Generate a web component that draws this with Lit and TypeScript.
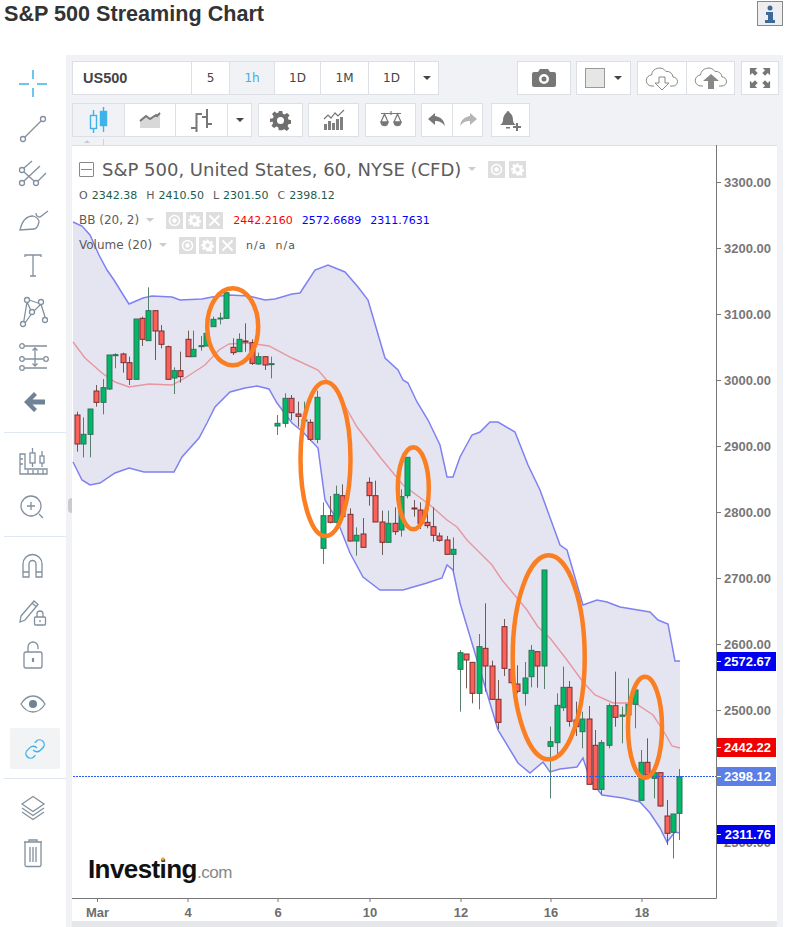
import { LitElement, html, css, svg, nothing } from 'lit';
import { customElement } from 'lit/decorators.js';

// [center x, body top, body bottom, wick top, wick bottom, colour], in zoomed-crop units
type Row = [number, number, number, number, number, 'g' | 'r'];

const seg = (ox: number, oy: number, rows: Row[]) =>
  rows.map(([x, t, b, wt, wb, c]) => ({
    x: ox + x / 3,
    top: oy + t / 3,
    bot: oy + b / 3,
    wt: oy + wt / 3,
    wb: oy + wb / 3,
    c,
  }));

const CANDLES = [
  ...seg(72, 260, [
    [14, 465, 552, 455, 575, 'r'], [33, 523, 552, 472, 592, 'g'], [55, 447, 523, 447, 592, 'g'],
    [72, 393, 427, 375, 440, 'r'], [94, 383, 427, 357, 463, 'g'], [112, 285, 387, 285, 390, 'g'],
    [130, 284, 287, 280, 325, 'g'], [152, 282, 308, 278, 338, 'r'], [170, 308, 358, 290, 375, 'r'],
    [191, 177, 358, 177, 358, 'g'], [209, 175, 238, 170, 258, 'r'], [228, 152, 242, 82, 242, 'g'],
    [249, 152, 213, 152, 300, 'r'], [267, 213, 253, 195, 265, 'r'], [288, 260, 358, 257, 358, 'r'],
    [306, 332, 354, 322, 402, 'g'], [325, 332, 350, 275, 368, 'r'], [347, 238, 290, 212, 290, 'r'],
    [364, 268, 290, 212, 290, 'g'], [386, 257, 260, 228, 272, 'g'], [403, 220, 258, 205, 258, 'g'],
    [422, 178, 200, 170, 200, 'g'], [443, 174, 177, 158, 193, 'g'], [461, 98, 175, 98, 175, 'g'],
    [483, 262, 278, 235, 285, 'r'], [501, 238, 275, 220, 275, 'g'], [519, 243, 246, 190, 275, 'r'],
    [541, 248, 310, 238, 315, 'r'], [558, 290, 312, 278, 315, 'g'], [580, 290, 315, 290, 330, 'r'],
    [598, 311, 314, 290, 355, 'g'],
  ]),
  ...seg(270, 370, [
    [22, 160, 168, 135, 195, 'g'], [44, 85, 160, 70, 172, 'g'], [62, 85, 128, 75, 150, 'r'],
    [83, 132, 139, 95, 170, 'r'], [101, 150, 153, 95, 175, 'g'], [119, 157, 208, 148, 213, 'r'],
    [141, 82, 208, 62, 220, 'g'],
    [159, 437, 535, 397, 582, 'g'], [181, 437, 457, 378, 460, 'r'], [199, 373, 457, 347, 460, 'g'],
    [217, 377, 440, 343, 445, 'r'], [239, 433, 513, 415, 515, 'r'], [257, 496, 513, 472, 557, 'g'],
    [278, 492, 532, 444, 532, 'r'], [296, 337, 377, 322, 407, 'r'], [314, 377, 456, 332, 456, 'r'],
    [335, 456, 517, 422, 555, 'r'], [353, 460, 517, 422, 517, 'g'], [375, 460, 485, 412, 495, 'r'],
    [393, 380, 480, 358, 500, 'g'], [411, 262, 377, 262, 385, 'g'], [432, 414, 417, 390, 440, 'r'],
    [450, 420, 460, 397, 477, 'r'], [472, 457, 467, 415, 475, 'r'], [490, 470, 496, 412, 515, 'r'],
    [508, 498, 511, 488, 515, 'r'], [530, 510, 553, 498, 553, 'r'], [548, 538, 553, 502, 605, 'g'],
  ]),
  ...seg(440, 550, [
    [60, 308, 358, 300, 485, 'g'], [78, 312, 330, 312, 415, 'r'], [96, 337, 430, 337, 460, 'r'],
    [117, 290, 430, 252, 478, 'g'], [135, 295, 348, 160, 425, 'r'], [157, 348, 448, 332, 450, 'r'],
    [175, 448, 517, 390, 537, 'r'], [193, 230, 355, 207, 378, 'r'], [214, 358, 398, 358, 400, 'r'],
    [232, 402, 424, 346, 430, 'r'], [254, 384, 430, 336, 467, 'g'], [272, 301, 380, 285, 412, 'g'],
    [290, 305, 348, 305, 413, 'r'], [312, 60, 348, 60, 417, 'g'], [330, 575, 589, 530, 745, 'g'],
    [351, 466, 578, 430, 612, 'g'], [369, 412, 473, 350, 483, 'g'], [387, 412, 514, 393, 530, 'r'],
    [408, 510, 530, 455, 558, 'r'], [426, 507, 545, 485, 595, 'g'], [448, 507, 703, 468, 703, 'r'],
    [466, 586, 718, 540, 720, 'r'], [484, 578, 718, 570, 735, 'g'],
  ]),
  ...seg(580, 620, [
    [86, 257, 376, 250, 385, 'g'], [104, 257, 292, 155, 320, 'r'], [126, 285, 289, 260, 370, 'g'],
    [144, 253, 285, 175, 290, 'g'], [165, 210, 253, 210, 325, 'g'], [183, 427, 541, 390, 543, 'g'],
    [201, 427, 465, 355, 465, 'r'], [222, 458, 475, 458, 535, 'g'], [240, 458, 558, 458, 560, 'r'],
    [262, 588, 640, 540, 675, 'r'], [280, 582, 637, 582, 715, 'g'], [298, 470, 580, 447, 660, 'g'],
  ]),
];

const UPPER = [
  [73, 222], [82, 226], [90, 235], [99, 255], [107, 270], [114, 280], [122, 293], [129, 304], [143, 298], [152, 296],
  [172, 297], [180, 300], [202, 299], [212, 297], [229, 295], [249, 296], [265, 300], [275, 299], [292, 294],
  [300, 293], [315, 270], [328, 265], [345, 272], [358, 287], [368, 300], [385, 358], [398, 370], [403, 380],
  [408, 383], [417, 402], [428, 420], [440, 445], [447, 477], [453, 477], [460, 457], [472, 435], [480, 432],
  [490, 422], [498, 422], [515, 432], [528, 465], [540, 490], [560, 545], [567, 550], [583, 605], [597, 600],
  [607, 602], [620, 607], [650, 612], [658, 620], [668, 624], [675, 661], [680, 661],
];
const LOWER = [
  [73, 462], [82, 480], [90, 485], [100, 483], [115, 473], [129, 468], [144, 472], [174, 472], [182, 457],
  [199, 438], [207, 423], [215, 407], [230, 392], [245, 388], [257, 386], [269, 389], [277, 403], [292, 423],
  [303, 432], [318, 448], [325, 500], [337, 520], [350, 553], [363, 577], [380, 590], [403, 590], [427, 583],
  [442, 578], [447, 565], [453, 570], [460, 603], [498, 730], [518, 763], [530, 773], [543, 762], [550, 772],
  [560, 769], [577, 767], [583, 758], [590, 780], [602, 795], [623, 798], [640, 802], [650, 813], [660, 828],
  [667, 842], [675, 832], [680, 833],
];
const MIDDLE = [
  [73, 342], [85, 358], [102, 373], [115, 382], [129, 387], [149, 384], [172, 385], [185, 378], [205, 365],
  [219, 350], [229, 344], [249, 343], [269, 346], [292, 358], [318, 370], [337, 392], [357, 427], [380, 457],
  [403, 485], [430, 505], [447, 520], [457, 527], [467, 540], [477, 550], [492, 565], [502, 580], [512, 592],
  [527, 610], [538, 627], [550, 638], [567, 660], [583, 682], [595, 695], [613, 703], [635, 703], [653, 715],
  [663, 730], [672, 746], [680, 748],
];
const pts = (a: number[][]) => a.map((p) => p.join(',')).join(' ');

const RINGS = [
  [232.7, 326.7, 25.5, 38.5], [325.5, 459, 25, 77], [413.3, 488.3, 15.5, 41],
  [548.7, 657.3, 36, 102], [645, 727.3, 17, 50.5],
];
const PRICES = [[3300, 182], [3200, 248], [3100, 314], [3000, 380], [2900, 446], [2800, 512], [2700, 578], [2600, 644], [2500, 710], [2300, 842]];
const TIMES: [string, number][] = [['Mar', 97.5], ['4', 188], ['6', 278], ['10', 370], ['12', 461], ['16', 551], ['18', 642]];
const TAGS: [string, number, number, string][] = [
  ['2572.67', 652, 59, '#0000f0'], ['2442.22', 738, 59, '#f00000'], ['2398.12', 767, 59, '#5b7fe6'], ['2311.76', 825, 58, '#0000f0'],
];

const ic = (body: unknown, cls = '') =>
  html`<svg class="ic ${cls}" width="34" height="34" viewBox="0 0 34 34">${body}</svg>`;

const TOOLS = [
  { h: 46, on: false, blue: true, i: svg`<path d="M17 3v9M17 21v9M3 17h10M21 17h10"/>` },
  { h: 44, i: svg`<circle cx="7" cy="27" r="2.5"/><circle cx="27" cy="7" r="2.5"/><path d="M9 25 25 9"/>` },
  { h: 48, i: svg`<circle cx="6" cy="12" r="2.5"/><circle cx="6" cy="25" r="2.5"/><circle cx="20" cy="25" r="2.5"/><path d="M8 14 18 23M8 23 24 8M8 10 16 3M22 23 30 15"/>` },
  { h: 45, i: svg`<path d="M4 25C6 16 11 11 17 11C20 12 23 14 23 17C22 21 20 24 18 24ZM20 8c0 3 2 4 4 4l8-6"/>` },
  { h: 44, i: svg`<path d="M9 8V6h16v2M17 6v21M14 27h6"/>` },
  { h: 46, i: svg`<path d="M11 8 16 19 25 10 29 23M16 19 7 32M13 6l12 4M11 8 7 32"/><circle cx="11" cy="6" r="2.5" fill="#fff"/><circle cx="25" cy="8" r="2.5" fill="#fff"/><circle cx="16" cy="18" r="2.5" fill="#fff"/><circle cx="7" cy="30" r="2.5" fill="#fff"/><circle cx="29" cy="26" r="2.5" fill="#fff"/>` },
  { h: 45, i: svg`<circle cx="6" cy="6" r="2.3"/><circle cx="6" cy="19" r="2.3"/><circle cx="6" cy="28" r="2.3"/><circle cx="30" cy="19" r="2.3"/><path d="M9 6h22M9 19h18M9 28h22M19 8v18M16.5 10.5 19 8l2.5 2.5M16.5 23.5 19 26l2.5-2.5"/>` },
  { h: 46, i: svg`<path class="solid" d="M8 17 18 7l3 3-4.500 4.500H29v5H16.500L21 24l-3 3z"/>`, line: true },
  { h: 44, i: svg`<path d="M4 8v20h27v-5H9V8zM4 13h3M4 18h3M12 24v4M17 24v4M22 24v4M27 24v4"/><rect x="14" y="7" width="5" height="10"/><path d="M16.5 2v5M16.5 17v4"/><rect x="24" y="10" width="4" height="7"/><path d="M26 5v5M26 17v4"/>` },
  { h: 44, i: svg`<circle cx="15" cy="16" r="10"/><path d="M11 16h8M15 12v8M23 24l4 4"/>`, line: true },
  { h: 44, i: svg`<path d="M7 27V14a9.500 9.500 0 0 1 19 0v13h-6V14a3.500 3.500 0 0 0-7 0v13zM7 22h6M20 22h6"/>` },
  { h: 46, i: svg`<path d="M5 21 18 6l4 3.500L9 25l-5 2zM16 8l4 3.500"/><rect x="18.5" y="22" width="11" height="8" rx="1"/><path d="M21 22v-3a3 3 0 0 1 6 0v3M24 25v2"/>` },
  { h: 46, i: svg`<rect x="8" y="11" width="18" height="16" rx="2"/><path d="M12 11V6a5 5 0 0 1 10 0v2"/><path d="M17 17v4" stroke-width="2.2"/>` },
  { h: 45, i: svg`<path d="M5 17c3-5 7-8 12-8s9 3 12 8c-3 5-7 8-12 8S8 22 5 17z"/><circle class="solid" cx="17" cy="17" r="4"/>` },
  { h: 45, blue: true, on: true, i: svg`<g transform="translate(6 6) scale(.92)"><path d="M10 13a5 5 0 0 0 7.540.540l3-3a5 5 0 0 0-7.070-7.070l-1.720 1.710"/><path d="M14 11a5 5 0 0 0-7.540-.540l-3 3a5 5 0 0 0 7.070 7.070l1.710-1.710"/></g>`, line: true },
  { h: 44, i: svg`<path d="M6 12 17 4.500 28 12 17 19.500zM6 16l11 7.500L28 16M6 20l11 7.500L28 20"/>` },
  { h: 44, i: svg`<path d="M9 6h16v23a1.500 1.500 0 0 1-1.500 1.500h-13A1.500 1.500 0 0 1 9 29zM8 6h18M13 6V4h8v2M14 11v15M17 11v15M20 11v15"/>` },
];

const dropdownCaret = html`<i class="caret"></i>`;

@customElement('app-root')
export class AppRoot extends LitElement {
  static styles = css`
    :host {
      display: block;
      width: 787px;
      height: 927px;
      background: #fff;
      overflow: hidden;
      font-family: 'Liberation Sans', Arial, sans-serif;
    }
    .head {
      height: 55px;
      display: flex;
      justify-content: space-between;
      align-items: flex-start;
      padding: 0 4px;
    }
    h1 {
      margin: 2px 0 0;
      font-size: 21.6px;
      line-height: 24px;
      font-weight: bold;
      color: #333;
    }
    .info {
      margin-top: 1px;
      width: 26px;
      height: 25px;
      box-sizing: border-box;
      border: 1px solid #888;
      background: #eeeef0;
      display: flex;
      align-items: center;
      justify-content: center;
    }
    .main {
      display: flex;
      height: 872px;
    }
    .side {
      width: 66px;
      flex: none;
      padding-top: 6px;
      box-sizing: border-box;
    }
    .tool {
      display: flex;
      align-items: center;
      justify-content: center;
    }
    .tool.on {
      margin: 0 6px 0 10px;
    }
    .tool.on span {
      width: 50px;
      height: 41px;
      border-radius: 2px;
      background: #f1f3f5;
      display: flex;
      align-items: center;
      justify-content: center;
    }
    .tool .ic {
      fill: none;
      stroke: #82909e;
      stroke-width: 1.3;
    }
    .tool .ic.blue {
      stroke: #3db3ea;
      stroke-width: 1.5;
    }
    .ic .solid {
      fill: #6f8296;
      stroke: none;
    }
    .sep {
      height: 1px;
      margin: 7px 0 8px 4px;
      background: #dfe8f0;
    }
    .panel {
      position: relative;
      width: 717px;
      background: #f0f2f6;
      padding: 6px 4px 0 6px;
      box-sizing: border-box;
    }
    .handle {
      position: absolute;
      left: 2px;
      top: 443px;
      width: 4px;
      height: 15px;
      border-radius: 4px 0 0 4px;
      background: #c9cbcf;
    }
    .row {
      display: flex;
      height: 34px;
    }
    .row + .row {
      margin-top: 8px;
    }
    .group {
      display: flex;
      background: #fff;
    }
    .cell {
      display: flex;
      align-items: center;
      justify-content: center;
      box-sizing: border-box;
      border-left: 1px solid #dcdfe4;
      border-top: 1px solid #dcdfe4;
      border-bottom: 1px solid #dcdfe4;
      font-size: 12px;
      font-family: 'DejaVu Sans', sans-serif;
      color: #444;
    }
    .cell:last-child {
      border-right: 1px solid #dcdfe4;
    }
    .cell.sel {
      background: #f0f2f6;
      color: #3db0e8;
    }
    .sym {
      justify-content: flex-start;
      padding-left: 10px;
      font-family: 'Liberation Sans', sans-serif;
      font-size: 14.5px;
      font-weight: bold;
      color: #444;
    }
    .w25 { width: 25px; }
    .w31 { width: 31px; }
    .w38 { width: 38px; }
    .w39 { width: 39px; }
    .w45 { width: 45px; }
    .w46 { width: 46px; }
    .w48 { width: 48px; }
    .w49 { width: 49px; }
    .w51 { width: 51px; }
    .w52 { width: 52px; }
    .w54 { width: 54px; }
    .w55 { width: 55px; }
    .w119 { width: 119px; }
    .caret {
      width: 0;
      height: 0;
      border: 4px solid transparent;
      border-top: 4px solid #444;
      border-bottom: none;
    }
    .swatch-cell {
      gap: 9px;
    }
    .swatch {
      width: 20px;
      height: 20px;
      box-sizing: border-box;
      border: 1px solid #999;
      background: #e6e6e6;
    }
    .mr5 { margin-right: 5px; }
    .mr6 { margin-right: 6px; }
    .ml-auto { margin-left: auto; }
    .mr8 { margin-right: 8px; }
    .strip {
      height: 8px;
      position: relative;
    }
    .strip i {
      position: absolute;
      left: 12px;
      top: 3px;
      border: 3px solid transparent;
      border-bottom: 3px solid #c8ccd2;
      border-top: none;
    }
    .strip b {
      position: absolute;
      left: 31px;
      top: 2px;
      width: 1px;
      height: 6px;
      background: #cfd3d8;
    }
    .chart {
      position: relative;
      height: 776px;
      width: 705px;
      box-sizing: border-box;
      background: #fff;
      border-top: 1px solid #dcdfe4;
    }
    .chart > svg {
      position: absolute;
      left: 0;
      top: -1px;
    }
    .foot {
      display: block;
      width: 705px;
      height: 6px;
      background: #e6e7ea;
    }
    .legend {
      position: absolute;
      left: 7px;
      top: 10px;
      font-family: 'DejaVu Sans', sans-serif;
      font-size: 11px;
      color: #5c5c5c;
      display: flex;
      flex-direction: column;
    }
    .lrow {
      display: flex;
      align-items: center;
      height: 24px;
      margin-bottom: 1px;
      white-space: nowrap;
    }
    .label {
      font-size: 12px;
    }
    .ltitle {
      font-size: 18px;
      height: 26px;
      color: #5c5c5c;
    }
    .ltitle .tri {
      margin-right: 12px;
    }
    .ltitle .sq {
      margin-right: 4px;
    }
    .minus {
      width: 15px;
      height: 15px;
      box-sizing: border-box;
      border: 1px solid #888;
      margin-right: 8px;
      position: relative;
      border-radius: 1px;
    }
    .minus::after {
      content: '';
      position: absolute;
      left: 1px;
      right: 1px;
      top: 6px;
      height: 1px;
      background: #888;
    }
    .tri {
      width: 0;
      height: 0;
      border: 4px solid transparent;
      border-top: 4px solid #ccc;
      border-bottom: none;
      margin: 0 12px 0 7px;
    }
    .sq {
      width: 17px;
      height: 17px;
      background: #dedede;
      margin-right: 3px;
      display: flex;
      align-items: center;
      justify-content: center;
    }
    .ohlc span {
      margin-right: 9px;
    }
    .ohlc em {
      font-style: normal;
      color: #1d5c4c;
      margin-left: 4px;
    }
    .vals {
      margin-left: 7px;
      display: flex;
      gap: 9px;
    }
    .red { color: #f00; }
    .blue { color: #00f; }
    .na { color: #555; letter-spacing: 1px; }
  `;

  private eye() {
    return html`<span class="sq"><svg width="13" height="13" viewBox="0 0 13 13"><circle cx="6.5" cy="6.5" r="5" fill="none" stroke="#fff" stroke-width="1.5"/><circle cx="6.5" cy="6.5" r="2.2" fill="#fff"/></svg></span>`;
  }

  private gear(size = 13, fill = '#fff') {
    return html`<svg width=${size} height=${size} viewBox="0 0 24 24"><path fill=${fill} fill-rule="evenodd" d="M10 1h4l.6 3.300 2.100.9 2.800-1.900 2.800 2.800-1.900 2.800.9 2.100 3 .6v4l-3.300.6-.9 2.100 1.900 2.800-2.800 2.800-2.800-1.900-2.100.9L14 23h-4l-.6-3.300-2.100-.9-2.800 1.900-2.800-2.800 1.900-2.800-.9-2.100L0 14v-4l3.300-.6.9-2.100L2.300 4.500l2.800-2.800 2.800 1.900 2.100-.9zM12 8a4 4 0 1 0 0 8 4 4 0 0 0 0-8z"/></svg>`;
  }

  private gearSq() {
    return html`<span class="sq">${this.gear()}</span>`;
  }

  private crossSq() {
    return html`<span class="sq"><svg width="13" height="13" viewBox="0 0 13 13"><path d="M1.500 1.500l10 10M11.500 1.500l-10 10" stroke="#fff" stroke-width="1.8"/></svg></span>`;
  }

  private sidebar() {
    return html`<div class="side">
      ${TOOLS.map((t) => html`
        <div class="tool ${t.on ? 'on' : ''}" style="height:${t.h}px">
          ${t.on
            ? html`<span>${ic(t.i, t.blue ? 'blue' : '')}</span>`
            : ic(t.i, t.blue ? 'blue' : '')}
        </div>
        ${t.line ? html`<div class="sep"></div>` : nothing}
      `)}
    </div>`;
  }

  private toolbarTop() {
    return html`<div class="row">
      <div class="group">
        <div class="cell w119 sym">US500</div>
        <div class="cell w38">5</div>
        <div class="cell w45 sel">1h</div>
        <div class="cell w46">1D</div>
        <div class="cell w48">1M</div>
        <div class="cell w46">1D</div>
        <div class="cell w25">${dropdownCaret}</div>
      </div>
      <div class="group ml-auto mr5">
        <div class="cell w54">
          <svg width="24" height="20" viewBox="0 0 24 20"><path fill="#777" fill-rule="evenodd" d="M8 1h8l2 3h4a2 2 0 0 1 2 2v11a2 2 0 0 1-2 2H2a2 2 0 0 1-2-2V6a2 2 0 0 1 2-2h4zM12 6a5 5 0 1 0 0 10 5 5 0 0 0 0-10zm0 2.500a2.500 2.500 0 1 1 0 5 2.500 2.500 0 0 1 0-5z"/></svg>
        </div>
      </div>
      <div class="group mr6">
        <div class="cell w55 swatch-cell"><span class="swatch"></span>${dropdownCaret}</div>
      </div>
      <div class="group mr6">
        <div class="cell w49">
          <svg width="34" height="24" viewBox="0 0 34 24"><path fill="none" stroke="#888" d="M9 20H7a5.500 5.500 0 0 1-.5-11A8 8 0 0 1 21 5.500 6 6 0 0 1 28 11a4.500 4.500 0 0 1 0 9h-3"/><path fill="#fff" stroke="#888" d="M14 11h6v6h4l-7 7-7-7h4z"/></svg>
        </div>
        <div class="cell w49">
          <svg width="34" height="24" viewBox="0 0 34 24"><path fill="none" stroke="#888" d="M9 20H7a5.500 5.500 0 0 1-.5-11A8 8 0 0 1 21 5.500 6 6 0 0 1 28 11a4.500 4.500 0 0 1 0 9h-3"/><path fill="#888" d="M14 23v-8H9l8-7 8 7h-5v8z"/></svg>
        </div>
      </div>
      <div class="group">
        <div class="cell w38">
          <svg width="22" height="22" viewBox="0 0 24 24" fill="#777"><path d="M1 1h8L6.500 3.500 9.500 6.500 6.500 9.500 3.500 6.500 1 9zM23 1v8l-2.500-2.500-3 3-3-3 3-3L15 1zM1 23v-8l2.500 2.500 3-3 3 3-3 3L9 23zM23 23h-8l2.500-2.500-3-3 3-3 3 3L23 15z"/></svg>
        </div>
      </div>
    </div>`;
  }

  private toolbarBottom() {
    return html`<div class="row">
      <div class="group mr6">
        <div class="cell w52 sel">
          <svg width="20" height="26" viewBox="0 0 20 26" fill="none" stroke="#3db3ea" stroke-width="1.4"><rect x="1.5" y="8.5" width="6" height="13"/><path d="M4.500 3v5M4.500 22v4"/><rect x="11.5" y="4.5" width="6" height="14" fill="#3db3ea"/><path d="M14.500 0v5M14.500 18v7"/></svg>
        </div>
        <div class="cell w51">
          <svg width="24" height="18" viewBox="0 0 24 18"><path fill="#d8d8d8" d="M2 10l6-5 4 3 6-3 4-4v16H2z"/><path fill="none" stroke="#777" stroke-width="2" d="M2 10l6-5 4 3 6-4 1 1 3-3"/></svg>
        </div>
        <div class="cell w52">
          <svg width="24" height="24" viewBox="0 0 24 24" fill="none" stroke="#777" stroke-width="2"><path d="M6.500 5v19M1 20h5.500M6.500 6H12M17 1v19M12 9h5M17 16h5"/></svg>
        </div>
        <div class="cell w25">${dropdownCaret}</div>
      </div>
      <div class="group mr5">
        <div class="cell w45">${this.gear(21, '#6f6f6f')}</div>
      </div>
      <div class="group mr6">
        <div class="cell w51">
          <svg width="24" height="22" viewBox="0 0 24 22"><path fill="#808080" d="M2 15h3v6H2zM6 12h3v9H6zM10 14h3v7h-3zM14 10h3v11h-3zM18 8h3v13h-3z"/><path fill="none" stroke="#777" stroke-width="1.2" d="M2 10l4-4 3 3 4-5 3 3 6-6"/></svg>
        </div>
      </div>
      <div class="group mr5">
        <div class="cell w51">
          <svg width="22" height="20" viewBox="0 0 22 20" fill="none" stroke="#777" stroke-width="1.2"><path d="M11 1v4M1 3.500h20M4.500 4 1 12h7zM17.500 4 14 12h7z"/><path fill="#777" d="M1 12c.5 5 6.500 5 7 0zM14 12c.5 5 6.500 5 7 0z"/></svg>
        </div>
      </div>
      <div class="group mr8">
        <div class="cell w31">
          <svg width="20" height="16" viewBox="0 0 20 16"><path fill="#777" d="M8 1 1 7l7 6V9c4 0 7 1 10 5-1-6-4-9-10-10z"/></svg>
        </div>
        <div class="cell w31">
          <svg width="20" height="16" viewBox="0 0 20 16"><path fill="#b5b5b5" d="M12 1l7 6-7 6V9C8 9 5 10 2 14c1-6 4-9 10-10z"/></svg>
        </div>
      </div>
      <div class="group">
        <div class="cell w39">
          <svg width="24" height="24" viewBox="0 0 24 24" fill="#777"><path d="M9 3a1.500 1.500 0 0 1 1.500 1.500C13 6 14 9 14 12c0 2 1 4 3 5H1c2-1 3-3 3-5 0-3 1.500-6 3.500-7.500A1.500 1.500 0 0 1 9 3z"/><path d="M7 19h4v1.500H7zM17 15h2v3h3v2h-3v3h-2v-3h-3v-2h3z"/></svg>
        </div>
      </div>
    </div>`;
  }

  private plot() {
    return html`<svg width="705" height="776" viewBox="72 145 705 776" font-family="'Liberation Sans', Arial, sans-serif">
      <polygon points="${pts(UPPER)} ${pts([...LOWER].reverse())}" fill="#e4e5f1"/>
      <polyline points=${pts(MIDDLE)} fill="none" stroke="#e8979f" stroke-width="1.4"/>
      <polyline points=${pts(UPPER)} fill="none" stroke="#7f80f2" stroke-width="1.5"/>
      <polyline points=${pts(LOWER)} fill="none" stroke="#7f80f2" stroke-width="1.5"/>
      ${CANDLES.map((k) => {
        const wick = k.c === 'g' ? '#57806c' : '#6f5a55';
        const edge = k.c === 'g' ? '#33705a' : '#7a2e2e';
        const fill = k.c === 'g' ? '#00b868' : '#fb6158';
        const x = Math.round(k.x);
        return svg`<path d="M${x + 0.5} ${k.wt}V${k.wb}" stroke=${wick} stroke-width="1"/>
          <rect x=${x - 2} y=${k.top} width="5" height=${Math.max(k.bot - k.top, 1)} fill=${fill} stroke=${edge} stroke-width="1"/>`;
      })}
      <path d="M73 776.5H716" stroke="#2a5cf0" stroke-dasharray="2 1"/>
      ${RINGS.map(([cx, cy, rx, ry]) => svg`<ellipse cx=${cx} cy=${cy} rx=${rx} ry=${ry} fill="none" stroke="#fb7e22" stroke-width="4.5"/>`)}

      <path d="M716.5 145V898.5M72 898.5H716.5" stroke="#777" fill="none"/>
      ${PRICES.map(([p, y]) => svg`
        <path d="M717 ${y + 0.5}h4" stroke="#777"/>
        <text x="771" y=${y + 4.5} text-anchor="end" font-size="13" font-weight="bold" fill="#777">${p.toFixed(2)}</text>`)}
      ${TIMES.map(([t, x]) => svg`
        <path d="M${x} 899v3" stroke="#777"/>
        <text x=${x} y="917" text-anchor="middle" font-size="13" font-weight="bold" fill="#6e6e6e">${t}</text>`)}
      ${TAGS.map(([t, y, w, bg]) => svg`
        <rect x="717" y=${y} width=${w} height="19" fill=${bg}/>
        <path d="M717 ${y + 9.5}h4" stroke="#fff"/>
        <text x="771" y=${y + 14} text-anchor="end" font-size="13" font-weight="bold" fill="#fff">${t}</text>`)}

      <g>
        <text x="88" y="878" font-size="26" font-weight="bold" letter-spacing="-0.6" fill="#111">Investing</text>
        <text x="197" y="878" font-size="17" fill="#888" letter-spacing="-0.5">.com</text>
        <circle cx="163" cy="859" r="1.8" fill="#f5a623"/>
      </g>
    </svg>`;
  }

  private legend() {
    return html`<div class="legend">
      <div class="lrow ltitle">
        <span class="minus"></span>S&amp;P 500, United States, 60, NYSE (CFD)
        <span class="tri"></span>${this.eye()}${this.gearSq()}
      </div>
      <div class="lrow ohlc">
        <span>O<em>2342.38</em></span><span>H<em>2410.50</em></span><span>L<em>2301.50</em></span><span>C<em>2398.12</em></span>
      </div>
      <div class="lrow">
        <span class="label">BB (20, 2)</span><span class="tri"></span>${this.eye()}${this.gearSq()}${this.crossSq()}
        <span class="vals"><span class="red">2442.2160</span><span class="blue">2572.6689</span><span class="blue">2311.7631</span></span>
      </div>
      <div class="lrow">
        <span class="label">Volume (20)</span><span class="tri"></span>${this.eye()}${this.gearSq()}${this.crossSq()}
        <span class="vals na"><span>n/a</span><span>n/a</span></span>
      </div>
    </div>`;
  }

  render() {
    return html`
      <div class="head">
        <h1>S&amp;P 500 Streaming Chart</h1>
        <div class="info">
          <svg width="12" height="18" viewBox="0 0 12 18" fill="#3d6a9a"><circle cx="6" cy="3" r="2.5"/><path d="M2 7h7v8h2v3H1v-3h3v-5H2z"/></svg>
        </div>
      </div>
      <div class="main">
        ${this.sidebar()}
        <div class="panel">
          <span class="handle"></span>
          ${this.toolbarTop()}
          ${this.toolbarBottom()}
          <div class="strip"><i></i><b></b></div>
          <div class="chart">
            ${this.plot()}
            ${this.legend()}
          </div>
          <div class="foot"></div>
        </div>
      </div>
    `;
  }
}
